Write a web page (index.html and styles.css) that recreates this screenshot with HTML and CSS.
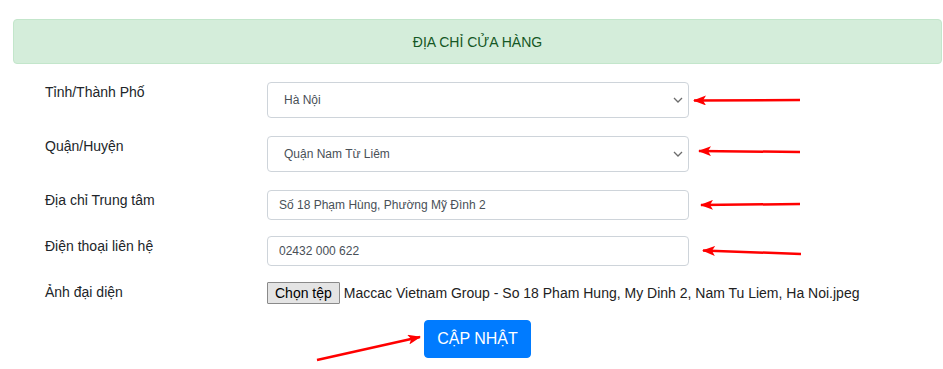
FILE: index.html
```html
<!DOCTYPE html>
<html lang="vi">
<head>
    <meta charset="UTF-8">
    <meta name="viewport" content="width=device-width, initial-scale=1.0">
    <title>Địa chỉ cửa hàng</title>
    <link rel="stylesheet" href="styles.css">
</head>
<body>
    <div class="page">
        <div class="alert-title">ĐỊA CHỈ CỬA HÀNG</div>

        <form class="store-form">
            <div class="form-row select-row">
                <label class="form-label">Tỉnh/Thành Phố</label>
                <div class="select-wrap">
                    <select class="form-control">
                        <option>Hà Nội</option>
                    </select>
                    <svg class="chevron" width="10" height="6" viewBox="0 0 10 6"><path d="M1 1 L5 5 L9 1" fill="none" stroke="#6c6c6c" stroke-width="1.3"/></svg>
                </div>
            </div>
            <div class="form-row select-row">
                <label class="form-label">Quận/Huyện</label>
                <div class="select-wrap">
                    <select class="form-control">
                        <option>Quận Nam Từ Liêm</option>
                    </select>
                    <svg class="chevron" width="10" height="6" viewBox="0 0 10 6"><path d="M1 1 L5 5 L9 1" fill="none" stroke="#6c6c6c" stroke-width="1.3"/></svg>
                </div>
            </div>
            <div class="form-row">
                <label class="form-label">Địa chỉ Trung tâm</label>
                <input class="form-control" type="text" value="Số 18 Phạm Hùng, Phường Mỹ Đình 2">
            </div>
            <div class="form-row">
                <label class="form-label">Điện thoại liên hệ</label>
                <input class="form-control" type="text" value="02432 000 622">
            </div>
            <div class="form-row file-row">
                <label class="form-label">Ảnh đại diện</label>
                <div class="file-field">
                    <button type="button" class="file-btn">Chọn tệp</button>
                    <span class="file-name">Maccac Vietnam Group - So 18 Pham Hung, My Dinh 2, Nam Tu Liem, Ha Noi.jpeg</span>
                </div>
            </div>
            <div class="actions">
                <button type="button" class="btn-primary">CẬP NHẬT</button>
            </div>
        </form>

        <!-- mũi tên chú thích -->
        <svg class="annotations" width="943" height="369" viewBox="0 0 943 369">
            <defs>
                <marker id="head" markerUnits="userSpaceOnUse" markerWidth="13" markerHeight="10" refX="12" refY="5" orient="auto">
                    <path d="M0,0 L13,5 L0,10 L3,5 Z" fill="#f00"/>
                </marker>
            </defs>
            <g stroke="#f00" stroke-width="2.5" fill="none" marker-end="url(#head)">
                <line x1="800" y1="100" x2="694" y2="100.5"/>
                <line x1="800" y1="152" x2="699" y2="151"/>
                <line x1="800" y1="204" x2="701" y2="205"/>
                <line x1="801" y1="254" x2="703" y2="250.5"/>
                <line x1="317" y1="360" x2="420" y2="337"/>
            </g>
        </svg>
    </div>
</body>
</html>
```

FILE: styles.css
```css
body {
    margin: 0;
    font-family: "Liberation Sans", Arial, sans-serif;
    color: #212529;
    background: #fff;
}
.page {
    position: relative;
    width: 943px;
    height: 369px;
    padding: 19px 1px 0 13px;
    box-sizing: border-box;
}
.alert-title {
    height: 45px;
    box-sizing: border-box;
    background-color: #d4edda;
    border: 1px solid #c3e6cb;
    border-radius: 4px;
    color: #155724;
    font-size: 14px;
    line-height: 45px;
    text-align: center;
}
.store-form {
    margin-top: 18px;
}
.form-row {
    display: grid;
    grid-template-columns: 222px 422px;
    padding-left: 32px;
    margin-bottom: 16px;
}
.select-row {
    margin-bottom: 18px;
}
.form-label {
    font-size: 14px;
    line-height: 21px;
    color: #212529;
}
.form-control {
    box-sizing: border-box;
    width: 422px;
    height: 30px;
    padding: 0 11px;
    border: 1px solid #ced4da;
    border-radius: 4px;
    font-family: "Liberation Sans", Arial, sans-serif;
    font-size: 12px;
    color: #495057;
    background: #fff;
}
.select-wrap {
    position: relative;
    height: 36px;
}
select.form-control {
    height: 36px;
    padding: 0 24px 0 16px;
    appearance: none;
    -webkit-appearance: none;
}
.chevron {
    position: absolute;
    right: 6px;
    top: 15px;
    pointer-events: none;
}
.file-row {
    margin-bottom: 16px;
}
.file-field {
    display: flex;
    align-items: center;
    gap: 4px;
    font-size: 14px;
    height: 22px;
}
.file-btn {
    flex-shrink: 0;
    white-space: nowrap;
    font-family: "Liberation Sans", Arial, sans-serif;
    font-size: 14px;
    color: #000;
    height: 22px;
    padding: 0 7px;
    background: #e4e4e4;
    border: 1px solid #8a8a8a;
    border-radius: 1px;
}
.file-name {
    color: #222;
    white-space: nowrap;
}
.actions {
    text-align: center;
}
.btn-primary {
    font-family: "Liberation Sans", Arial, sans-serif;
    font-size: 16px;
    line-height: 24px;
    padding: 6px 12px;
    color: #fff;
    background-color: #007bff;
    border: 1px solid #007bff;
    border-radius: 4px;
}
.annotations {
    position: absolute;
    left: 0;
    top: 0;
    pointer-events: none;
}
```
